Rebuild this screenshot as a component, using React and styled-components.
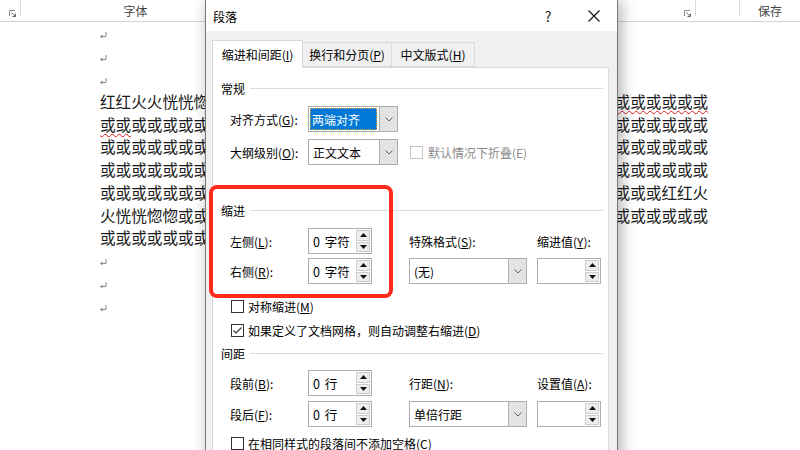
import React from "react";
import styled, { createGlobalStyle } from "styled-components";

const GlobalStyle = createGlobalStyle`
  html, body {
    margin: 0;
    padding: 0;
    background: #fff;
  }
  body {
    font-family: "Noto Sans CJK SC", "Noto Sans", sans-serif;
  }
`;

const Screen = styled.div`
  position: relative;
  width: 800px;
  height: 450px;
  overflow: hidden;
  background: #fff;
`;

/* ---------- Word ribbon strip ---------- */

const RibbonStrip = styled.div`
  display: flex;
  height: 21px;
  border-bottom: 1px solid #d2d2d2;
  font-size: 12px;
  color: #444;
`;

const RibbonCell = styled.div`
  width: ${(p) => (p.width ? `${p.width}px` : "auto")};
  flex: ${(p) => (p.width ? "none" : 1)};
  display: flex;
  align-items: ${(p) => (p.launcher ? "flex-end" : "center")};
  justify-content: ${(p) => (p.launcher ? "flex-end" : "center")};
  padding-bottom: ${(p) => (p.launcher ? "4px" : "0")};
  padding-right: ${(p) => (p.launcher ? "4px" : "0")};
  box-sizing: border-box;
`;

const RibbonSep = styled.div`
  width: 1px;
  height: 16px;
  background: #dcdcdc;
`;

const Launcher = () => (
  <svg width="7" height="7" viewBox="0 0 7 7">
    <polyline points="0.5,6 0.5,0.5 6,0.5" fill="none" stroke="#8a8a8a" strokeWidth="1" />
    <path d="M2.5 2.5 L6.5 6.5 M6.5 3.5 V6.5 H3.5" fill="none" stroke="#666" strokeWidth="1" />
  </svg>
);

/* ---------- document ---------- */

const Page = styled.div`
  padding-left: 100px;
  font-family: "Noto Sans CJK SC", sans-serif;
  font-size: 15.6px;
  line-height: 22.7px;
  color: #1a1a1a;
`;

const Line = styled.div`
  height: 22.7px;
  white-space: nowrap;
`;

const Wavy = styled.span`
  text-decoration: underline wavy #e8191b;
  text-decoration-thickness: 1px;
  text-underline-offset: 2px;
`;

const ReturnMark = () => (
  <svg width="7" height="7" viewBox="0 0 7 7" style={{ verticalAlign: "middle" }}>
    <path d="M6 0 V4.5 H2" fill="none" stroke="#8a8a8a" strokeWidth="1" />
    <polygon points="0,4.5 2.5,2.5 2.5,6.5" fill="#8a8a8a" />
  </svg>
);

/* ---------- dialog ---------- */

const Dialog = styled.div`
  position: absolute;
  left: 205px;
  top: 0;
  width: 413px;
  height: 470px;
  box-sizing: border-box;
  border: 1px solid #7a7a7a;
  border-top: none;
  background: #f0f0f0;
  box-shadow: 3px 0 14px rgba(0, 0, 0, 0.32);
  font-size: 12px;
  color: #000;
`;

const TitleBar = styled.div`
  display: flex;
  align-items: center;
  height: 31px;
  background: #fff;
  padding-left: 7px;
`;

const Title = styled.div`
  flex: 1;
  font-size: 12px;
  padding-top: 1px;
`;

const TitleButton = styled.div`
  width: 46px;
  height: 31px;
  display: flex;
  align-items: center;
  justify-content: center;
  font-size: 14px;
  color: #222;
`;

const DialogBody = styled.div`
  padding: 9px 8px 0 6px;
`;

const TabRow = styled.div`
  display: flex;
  align-items: flex-end;
  height: 27px;
  position: relative;
  z-index: 1;
`;

const Tab = styled.div`
  width: ${(p) => p.width}px;
  height: ${(p) => (p.active ? 28 : 25)}px;
  margin-left: ${(p) => (p.first ? 0 : -1)}px;
  margin-bottom: ${(p) => (p.active ? -1 : 0)}px;
  box-sizing: border-box;
  border: 1px solid #d9d9d9;
  border-bottom: ${(p) => (p.active ? "none" : "1px solid #d9d9d9")};
  background: ${(p) => (p.active ? "#fff" : "#f0f0f0")};
  display: flex;
  align-items: center;
  justify-content: center;
  padding-bottom: ${(p) => (p.active ? 1 : 0)}px;
  position: relative;
  z-index: ${(p) => (p.active ? 2 : 1)};
`;

const TabPanel = styled.div`
  background: #fff;
  border: 1px solid #d9d9d9;
  height: 400px;
  box-sizing: border-box;
  padding-right: 5px;
`;

const Heading = styled.div`
  display: flex;
  align-items: center;
  gap: 5px;
  height: 20px;
  margin-top: ${(p) => p.mt}px;
  padding-left: 8px;

  &::after {
    content: "";
    flex: 1;
    height: 1px;
    background: #dcdcdc;
  }
`;

const FormRow = styled.div`
  display: flex;
  align-items: center;
  height: 26px;
  margin-top: ${(p) => p.mt}px;
  padding-left: 17px;
`;

const Label = styled.div`
  width: ${(p) => (p.width ? `${p.width}px` : "auto")};
  white-space: nowrap;
  color: ${(p) => (p.disabled ? "#8c8c8c" : "#000")};
`;

const U = styled.span`
  text-decoration: underline;
  text-underline-offset: 1px;
`;

const FieldGrid = styled.div`
  display: grid;
  grid-template-columns: 78px 101px 128px 64px;
  grid-auto-rows: 26px;
  row-gap: ${(p) => p.gap}px;
  align-items: center;
  margin-top: ${(p) => p.mt}px;
  padding-left: 17px;
`;

const SelectBox = styled.div`
  width: ${(p) => p.width}px;
  height: 26px;
  box-sizing: border-box;
  border: 1px solid #adadad;
  background: #fff;
  display: flex;
`;

const SelectValue = styled.div`
  flex: 1;
  display: flex;
  align-items: center;
  padding: 1px;
`;

const SelectText = styled.div`
  flex: 1;
  height: 100%;
  box-sizing: border-box;
  display: flex;
  align-items: center;
  padding-left: ${(p) => (p.focused ? 1 : 2)}px;
  background: ${(p) => (p.focused ? "#0078d7" : "transparent")};
  color: ${(p) => (p.focused ? "#fff" : "#000")};
  border: 1px dotted ${(p) => (p.focused ? "#f3a44a" : "transparent")};
  margin-right: 1px;
`;

const DropButton = styled.div`
  width: 17px;
  background: #e3e3e3;
  border-left: 1px solid #adadad;
  display: flex;
  align-items: center;
  justify-content: center;
`;

const Chevron = () => (
  <svg width="8" height="5" viewBox="0 0 8 5">
    <polyline points="0.5,0.5 4,4 7.5,0.5" fill="none" stroke="#606060" strokeWidth="1" />
  </svg>
);

const Select = ({ width, value, focused }) => (
  <SelectBox width={width}>
    <SelectValue>
      <SelectText focused={focused}>{value}</SelectText>
    </SelectValue>
    <DropButton>
      <Chevron />
    </DropButton>
  </SelectBox>
);

const SpinBox = styled.div`
  width: 64px;
  height: 26px;
  box-sizing: border-box;
  border: 1px solid #adadad;
  background: #fff;
  display: flex;
  align-items: stretch;
  padding: 1px 1px 1px 0;
`;

const SpinValue = styled.div`
  flex: 1;
  display: flex;
  align-items: center;
  padding-left: 4px;
  font-size: 12.5px;
  word-spacing: 2px;
  white-space: pre;
`;

const SpinButtons = styled.div`
  width: 14px;
  display: flex;
  flex-direction: column;
  gap: 1px;
`;

const SpinButton = styled.div`
  flex: 1;
  border: 1px solid #cdcdcd;
  background: #eeeeee;
  display: flex;
  align-items: center;
  justify-content: center;
`;

const Arrow = ({ down }) => (
  <svg width="7" height="4" viewBox="0 0 7 4">
    <polygon points={down ? "0,0 7,0 3.5,4" : "0,4 7,4 3.5,0"} fill="#111" />
  </svg>
);

const Spin = ({ value }) => (
  <SpinBox>
    <SpinValue>{value}</SpinValue>
    <SpinButtons>
      <SpinButton>
        <Arrow />
      </SpinButton>
      <SpinButton>
        <Arrow down />
      </SpinButton>
    </SpinButtons>
  </SpinBox>
);

const CheckRow = styled.div`
  display: flex;
  align-items: center;
  gap: ${(p) => (p.inline ? 5 : 4)}px;
  height: 20px;
  margin-top: ${(p) => p.mt || 0}px;
  margin-left: ${(p) => (p.inline ? 12 : 0)}px;
  padding-left: ${(p) => (p.inline ? 0 : 18)}px;
`;

const Box = styled.div`
  width: 13px;
  height: 13px;
  box-sizing: border-box;
  border: 1px solid ${(p) => (p.disabled ? "#c4c4c4" : "#333")};
  background: #fff;
  display: flex;
  align-items: center;
  justify-content: center;
`;

const Tick = () => (
  <svg width="11" height="11" viewBox="0 0 11 11">
    <polyline points="1.5,5.5 4,8 9.5,2.5" fill="none" stroke="#333" strokeWidth="1.2" />
  </svg>
);

const Checkbox = ({ checked, disabled, children, ...rest }) => (
  <CheckRow {...rest}>
    <Box disabled={disabled}>{checked && <Tick />}</Box>
    <Label disabled={disabled}>{children}</Label>
  </CheckRow>
);

const Highlight = styled.div`
  position: absolute;
  left: 209px;
  top: 185px;
  width: 184px;
  height: 113px;
  box-sizing: border-box;
  border: 4px solid #ff2a1c;
  border-radius: 8px;
`;

const CloseIcon = () => (
  <svg width="12" height="12" viewBox="0 0 12 12">
    <path d="M0.5 0.5 L11.5 11.5 M11.5 0.5 L0.5 11.5" stroke="#111" strokeWidth="1.1" />
  </svg>
);

const lines = [
  { text: "红红火火恍恍惚惚", wavy: "或".repeat(31) },
  { wavy: "或或", text: "或".repeat(37) },
  { text: "或".repeat(39) },
  { text: "或".repeat(39) },
  { text: "或".repeat(36) + "红红火" },
  { text: "火恍恍惚惚" + "或".repeat(34) },
  { text: "或".repeat(12) },
];

export default function App() {
  return (
    <Screen>
      <GlobalStyle />
      <RibbonStrip>
        <RibbonCell width={20} launcher>
          <Launcher />
        </RibbonCell>
        <RibbonSep />
        <RibbonCell width={229}>字体</RibbonCell>
        <RibbonCell width={445} launcher>
          <Launcher />
        </RibbonCell>
        <RibbonSep />
        <RibbonCell width={43} />
        <RibbonSep />
        <RibbonCell>保存</RibbonCell>
      </RibbonStrip>

      <Page>
        <Line><ReturnMark /></Line>
        <Line><ReturnMark /></Line>
        <Line><ReturnMark /></Line>
        {lines.map((l, i) => (
          <Line key={i}>
            {i === 1 ? (
              <>
                <Wavy>{l.wavy}</Wavy>
                {l.text}
              </>
            ) : (
              <>
                {l.text}
                {l.wavy && <Wavy>{l.wavy}</Wavy>}
              </>
            )}
          </Line>
        ))}
        <Line><ReturnMark /></Line>
        <Line><ReturnMark /></Line>
        <Line><ReturnMark /></Line>
      </Page>

      <Dialog>
        <TitleBar>
          <Title>段落</Title>
          <TitleButton>?</TitleButton>
          <TitleButton>
            <CloseIcon />
          </TitleButton>
        </TitleBar>
        <DialogBody>
          <TabRow>
            <Tab width={91} active first>
              缩进和间距(<U>I</U>)
            </Tab>
            <Tab width={90}>
              换行和分页(<U>P</U>)
            </Tab>
            <Tab width={84}>
              中文版式(<U>H</U>)
            </Tab>
          </TabRow>
          <TabPanel>
            <Heading mt={10}>常规</Heading>
            <FormRow mt={8}>
              <Label width={78}>
                对齐方式(<U>G</U>):
              </Label>
              <Select width={90} value="两端对齐" focused />
            </FormRow>
            <FormRow mt={7}>
              <Label width={78}>
                大纲级别(<U>O</U>):
              </Label>
              <Select width={90} value="正文文本" />
              <Checkbox inline disabled>
                默认情况下折叠(E)
              </Checkbox>
            </FormRow>

            <Heading mt={35}>缩进</Heading>
            <FieldGrid mt={8} gap={4}>
              <Label>
                左侧(<U>L</U>):
              </Label>
              <Spin value="0 字符" />
              <Label>
                特殊格式(<U>S</U>):
              </Label>
              <Label>
                缩进值(<U>Y</U>):
              </Label>
              <Label>
                右侧(<U>R</U>):
              </Label>
              <Spin value="0 字符" />
              <Select width={118} value="(无)" />
              <Spin value="" />
            </FieldGrid>
            <Checkbox mt={12}>
              对称缩进(<U>M</U>)
            </Checkbox>
            <Checkbox mt={4} checked>
              如果定义了文档网格，则自动调整右缩进(<U>D</U>)
            </Checkbox>

            <Heading mt={3}>间距</Heading>
            <FieldGrid mt={7} gap={5}>
              <Label>
                段前(<U>B</U>):
              </Label>
              <Spin value="0 行" />
              <Label>
                行距(<U>N</U>):
              </Label>
              <Label>
                设置值(<U>A</U>):
              </Label>
              <Label>
                段后(<U>F</U>):
              </Label>
              <Spin value="0 行" />
              <Select width={118} value="单倍行距" />
              <Spin value="" />
            </FieldGrid>
            <Checkbox mt={6}>
              在相同样式的段落间不添加空格(<U>C</U>)
            </Checkbox>
          </TabPanel>
        </DialogBody>
      </Dialog>

      <Highlight />
    </Screen>
  );
}
